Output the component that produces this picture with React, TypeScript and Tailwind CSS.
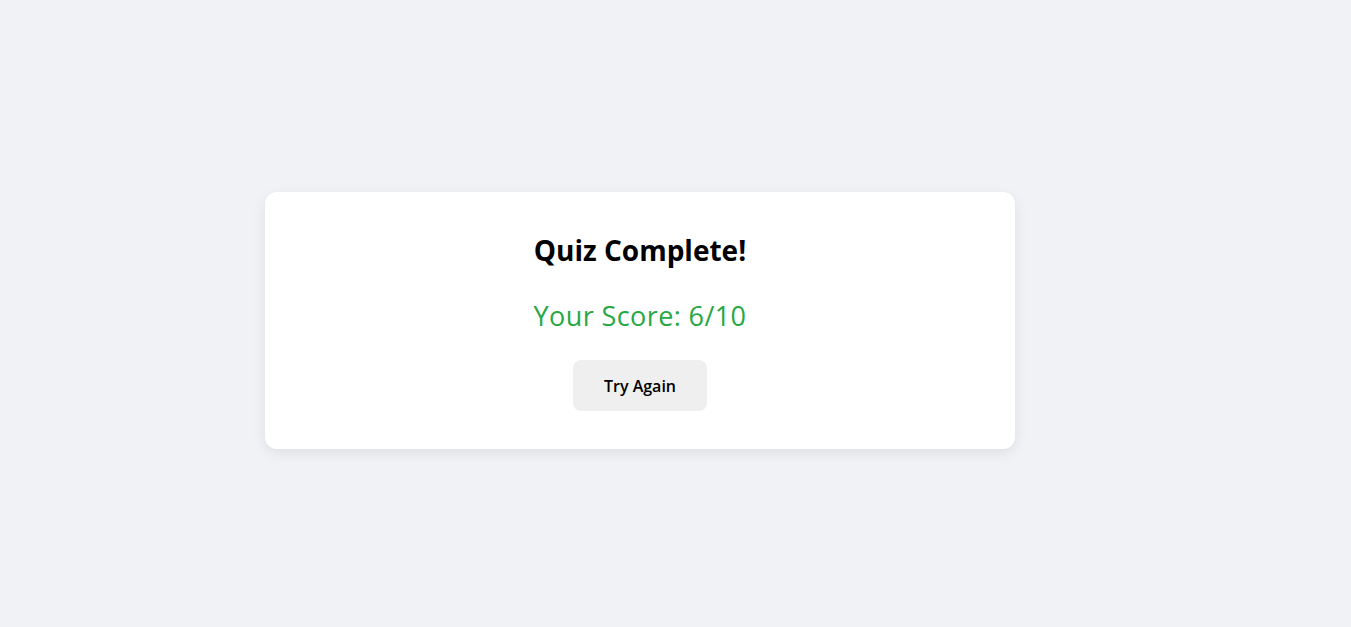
import React from 'react';

const App: React.FC = () => {
  return (
    <div className="min-h-screen w-full bg-[#f0f2f5] flex items-center justify-center pt-[14px] pr-[71px] font-['Open_Sans',sans-serif]">
      <div className="w-[750px] bg-white rounded-xl shadow-[0_4px_14px_rgba(0,0,0,0.08)] pt-[37px] pb-[38px] flex flex-col items-center">
        {/* Result heading */}
        <h2 className="text-[28px] leading-[42px] font-bold text-black">Quiz Complete!</h2>
        <p className="mt-[25px] text-[27px] leading-[40px] text-[#28a745] tracking-[0.4px]">Your Score: 6/10</p>
        <button className="mt-[24px] h-[51px] w-[134px] rounded-lg bg-[#efefef] text-[16px] font-semibold text-black">
          Try Again
        </button>
      </div>
    </div>
  );
};

export default App;
